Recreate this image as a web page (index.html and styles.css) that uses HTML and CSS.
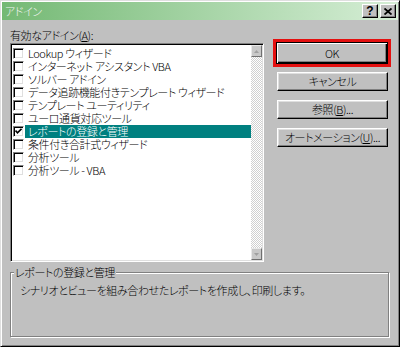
FILE: index.html
```html
<!DOCTYPE html>
<html lang="ja">
  <head>
    <meta charset="UTF-8" />
    <title>アドイン</title>
    <link rel="stylesheet" href="styles.css">
  </head>
  <body>
    <div class="dialog">
      <div class="titlebar">
        <span class="title">アドイン</span>
        <div class="caption-buttons">
          <span class="cap-btn help">?</span>
          <span class="cap-btn">
            <svg width="8" height="7" viewBox="0 0 8 7">
              <path d="M0.5 0.5 L7.5 6.5 M7.5 0.5 L0.5 6.5" stroke="#000" stroke-width="1.8" />
            </svg>
          </span>
        </div>
      </div>

      <div class="content">
        <div class="main-row">
          <div class="list-col">
            <div class="list-label">有効なアドイン(<u>A</u>):</div>
            <div class="listbox">
              <ul class="items">
                <li class="item"><span class="check"></span><span class="item-label">Lookup ウィザード</span></li>
                <li class="item"><span class="check"></span><span class="item-label">インターネット アシスタント VBA</span></li>
                <li class="item"><span class="check"></span><span class="item-label">ソルバー アドイン</span></li>
                <li class="item"><span class="check"></span><span class="item-label">データ追跡機能付きテンプレート ウィザード</span></li>
                <li class="item"><span class="check"></span><span class="item-label">テンプレート ユーティリティ</span></li>
                <li class="item"><span class="check"></span><span class="item-label">ユーロ通貨対応ツール</span></li>
                <li class="item selected">
                  <span class="check">
                    <svg width="7" height="7" viewBox="0 0 7 7">
                      <path d="M0.5 2.5 L2.5 4.8 L6.5 0.8" fill="none" stroke="#000" stroke-width="1.6" />
                    </svg>
                  </span>
                  <span class="item-label">レポートの登録と管理</span>
                </li>
                <li class="item"><span class="check"></span><span class="item-label">条件付き合計式ウィザード</span></li>
                <li class="item"><span class="check"></span><span class="item-label">分析ツール</span></li>
                <li class="item"><span class="check"></span><span class="item-label">分析ツール - VBA</span></li>
              </ul>
              <div class="scrollbar">
                <span class="scroll-btn">
                  <svg width="5" height="3" viewBox="0 0 5 3"><path d="M2.5 0 L5 3 L0 3 Z" fill="#a0a0a0" /></svg>
                </span>
                <span class="scroll-track"></span>
                <span class="scroll-btn">
                  <svg width="5" height="3" viewBox="0 0 5 3"><path d="M0 0 L5 0 L2.5 3 Z" fill="#a0a0a0" /></svg>
                </span>
              </div>
            </div>
          </div>

          <div class="button-col">
            <div class="default-frame">
              <button class="btn btn-default">OK</button>
            </div>
            <button class="btn">キャンセル</button>
            <button class="btn">参照(<u>B</u>)...</button>
            <button class="btn">オートメーション(<u>U</u>)...</button>
          </div>
        </div>

        <fieldset class="group">
          <legend>レポートの登録と管理</legend>
          <p class="description">シナリオとビューを組み合わせたレポートを作成し、印刷します。</p>
        </fieldset>
      </div>
    </div>
  </body>
</html>
```

FILE: styles.css
```css
body {
  margin: 0;
  font-family: "Noto Sans CJK JP", sans-serif;
  font-size: 11px;
  font-weight: 300;
  letter-spacing: -0.4px;
  font-feature-settings: "palt";
  color: #000;
}

.dialog {
  width: 400px;
  height: 347px;
  box-sizing: border-box;
  background-color: #c0c0c0;
  border: 1px solid;
  border-color: #dfdfdf #000 #000 #dfdfdf;
  box-shadow: inset 1px 1px #fff, inset -1px -1px #808080;
  padding: 1px;
}

/* Title bar */
.titlebar {
  height: 18px;
  display: flex;
  align-items: center;
  justify-content: space-between;
  padding: 0 2px 0 3px;
  background: linear-gradient(to right, #74b974, #d6eed6);
}

.title {
  color: #f4f4f4;
  line-height: 18px;
}

.caption-buttons {
  display: flex;
  gap: 2px;
}

.cap-btn {
  width: 16px;
  height: 14px;
  box-sizing: border-box;
  display: flex;
  align-items: center;
  justify-content: center;
  background-color: #c0c0c0;
  border: 1px solid;
  border-color: #fff #000 #000 #fff;
  box-shadow: inset -1px -1px #808080;
}

.cap-btn.help {
  font-family: "Liberation Sans", Arial, sans-serif;
  font-weight: bold;
  font-size: 12px;
  line-height: 12px;
  letter-spacing: 0;
}

/* Dialog content */
.content {
  padding: 9px 8px 0 8px;
}

.main-row {
  display: flex;
}

.list-label {
  line-height: 13px;
  margin-bottom: 1px;
}

.listbox {
  width: 254px;
  height: 219px;
  box-sizing: border-box;
  display: flex;
  background-color: #fff;
  border: 1px solid;
  border-color: #808080 #fff #fff #808080;
  box-shadow: inset 1px 1px #000, inset -1px -1px #dfdfdf;
  padding: 1px;
}

.items {
  flex: 1;
  min-width: 0;
  overflow: hidden;
  list-style: none;
  margin: 0;
  padding: 2px 0 0 1px;
}

.item {
  display: flex;
  height: 13px;
}

.check {
  width: 11px;
  height: 11px;
  flex-shrink: 0;
  box-sizing: border-box;
  margin-top: 1px;
  display: flex;
  align-items: center;
  justify-content: center;
  background-color: #fff;
  border: 1px solid;
  border-color: #808080 #fff #fff #808080;
  box-shadow: inset 1px 1px #000, inset -1px -1px #dfdfdf;
}

.item-label {
  flex: 1;
  margin-left: 1px;
  padding-left: 3px;
  line-height: 13px;
  white-space: nowrap;
}

.item.selected .item-label {
  background-color: #008080;
  color: #fff;
}

/* Scrollbar */
.scrollbar {
  width: 11px;
  flex-shrink: 0;
  display: flex;
  flex-direction: column;
  background: repeating-conic-gradient(#fff 0 25%, #d0d0d0 0 50%) 0 0 / 2px 2px;
}

.scroll-btn {
  height: 12px;
  box-sizing: border-box;
  display: flex;
  align-items: center;
  justify-content: center;
  background-color: #c8c8c8;
  border: 1px solid;
  border-color: #e8e8e8 #707070 #707070 #e8e8e8;
}

.scroll-track {
  flex: 1;
}

/* Command buttons */
.button-col {
  margin-left: 9px;
  display: flex;
  flex-direction: column;
  align-items: flex-start;
}

.default-frame {
  margin-top: 10px;
  width: 118px;
  height: 28px;
  box-sizing: border-box;
  border: 3px solid #e41010;
}

.btn {
  width: 111px;
  height: 19px;
  box-sizing: border-box;
  margin: 9px 0 0 4px;
  padding: 0;
  font: inherit;
  letter-spacing: inherit;
  font-feature-settings: inherit;
  line-height: 15px;
  white-space: nowrap;
  color: #000;
  background-color: #c0c0c0;
  border: 1px solid;
  border-color: #fff #000 #000 #fff;
  box-shadow: inset -1px -1px #808080, inset 1px 1px #dfdfdf;
}

.default-frame + .btn {
  margin-top: 5px;
}

.btn-default {
  width: 112px;
  height: 22px;
  margin: 0;
  line-height: 18px;
  border: 1px solid #000;
  box-shadow: inset 1px 1px #fff, inset -1px -1px #000, inset -2px -2px #808080;
}

/* Description group */
.group {
  margin: 4px 0 0 0;
  width: 379px;
  height: 71px;
  box-sizing: border-box;
  border: 1px solid #808080;
  box-shadow: 1px 1px #fff, inset 1px 1px #fff;
  padding: 5px 9px 0 9px;
}

.group legend {
  margin-left: -6px;
  padding: 0 1px;
  line-height: 13px;
  background-color: #c0c0c0;
}

.description {
  margin: 0;
  line-height: 13px;
}
```
